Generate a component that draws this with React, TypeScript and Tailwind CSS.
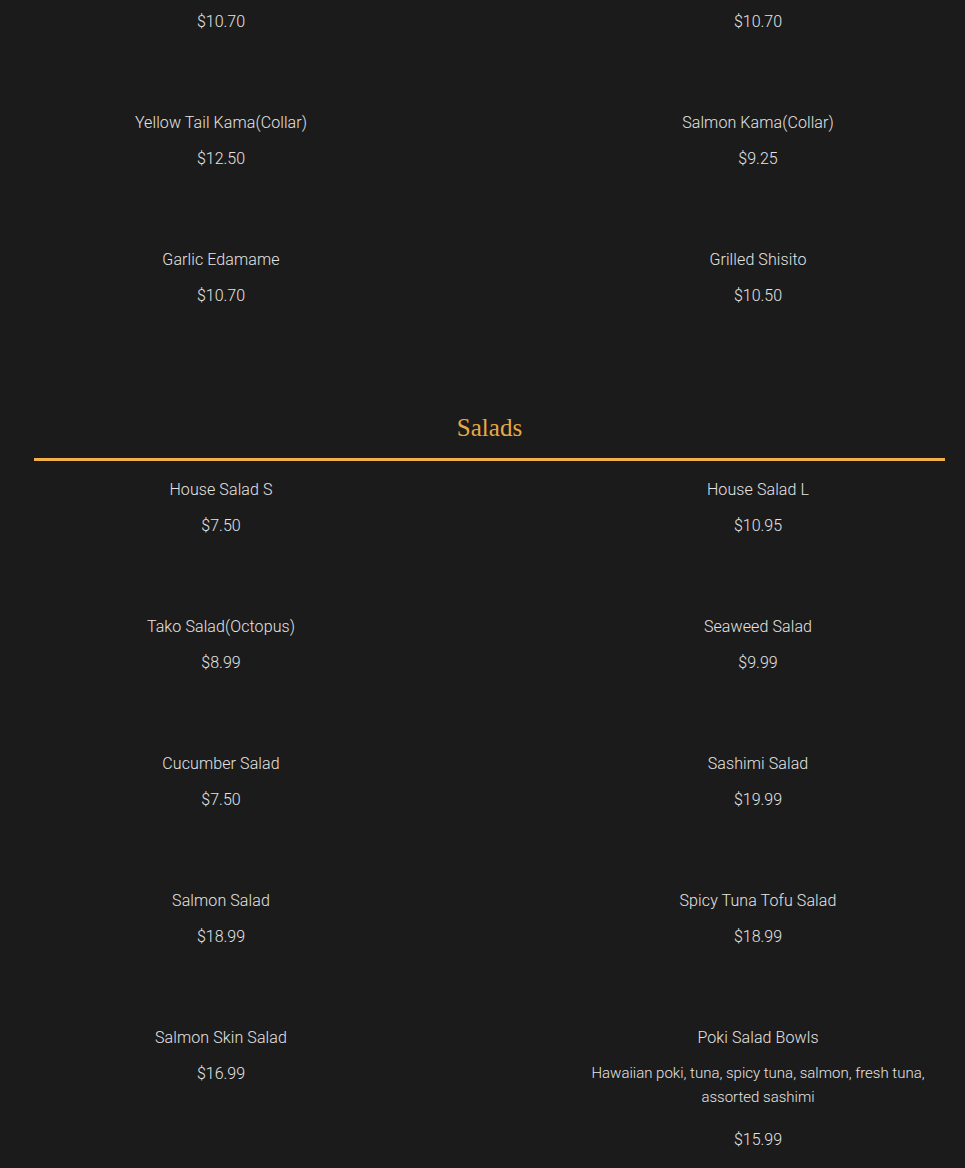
import React from "react";

type Item = { name?: string; price: string; desc?: string };

const top: Item[] = [
  { price: "$10.70" },
  { price: "$10.70" },
  { name: "Yellow Tail Kama(Collar)", price: "$12.50" },
  { name: "Salmon Kama(Collar)", price: "$9.25" },
  { name: "Garlic Edamame", price: "$10.70" },
  { name: "Grilled Shisito", price: "$10.50" },
];

const salads: Item[] = [
  { name: "House Salad S", price: "$7.50" },
  { name: "House Salad L", price: "$10.95" },
  { name: "Tako Salad(Octopus)", price: "$8.99" },
  { name: "Seaweed Salad", price: "$9.99" },
  { name: "Cucumber Salad", price: "$7.50" },
  { name: "Sashimi Salad", price: "$19.99" },
  { name: "Salmon Salad", price: "$18.99" },
  { name: "Spicy Tuna Tofu Salad", price: "$18.99" },
  { name: "Salmon Skin Salad", price: "$16.99" },
  {
    name: "Poki Salad Bowls",
    price: "$15.99",
    desc: "Hawaiian poki, tuna, spicy tuna, salmon, fresh tuna, assorted sashimi",
  },
];

function MenuItem({ item }: { item: Item }) {
  return (
    <div className="flex flex-col items-center text-center">
      {item.name && (
        <div className="text-[16px] leading-6 font-light tracking-[0.1px] text-[#e4e4e4] mb-3">
          {item.name}
        </div>
      )}
      {item.desc && (
        <div className="text-[15px] leading-6 font-light text-[#e4e4e4] -mt-[1px] mb-[19px]">
          {item.desc}
        </div>
      )}
      <div className="text-[16px] leading-6 font-light text-[#e4e4e4]">{item.price}</div>
    </div>
  );
}

export default function App() {
  return (
    <div
      className="min-h-screen bg-[#1b1b1b] pl-[34px] pr-[20px] pt-[10px] pb-10"
      style={{ fontFamily: "Roboto, 'Liberation Sans', sans-serif" }}
    >
      <div className="grid grid-cols-2 gap-x-[163px] gap-y-[77px]">
        {top.map((it, i) => (
          <MenuItem key={i} item={it} />
        ))}
      </div>
      <div className="mt-[102px] h-9 flex items-center justify-center">
        <h2
          className="text-[25px] leading-9 text-[#e6a945]"
          style={{ fontFamily: "'Liberation Serif', 'Times New Roman', serif" }}
        >
          Salads
        </h2>
      </div>
      <div className="mt-[12px] h-[3px] bg-[#f2b04b]" />
      <div className="mt-[17px] grid grid-cols-2 gap-x-[163px] gap-y-[77px]">
        {salads.map((it, i) => (
          <MenuItem key={i} item={it} />
        ))}
      </div>
    </div>
  );
}
